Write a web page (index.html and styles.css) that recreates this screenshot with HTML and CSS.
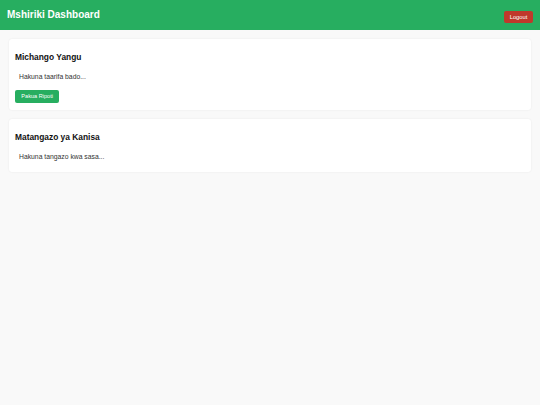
FILE: index.html
```html
<!DOCTYPE html>
<html lang="sw">
<head>
<meta charset="utf-8">
<title>Mshiriki Dashboard</title>
<link rel="stylesheet" href="styles.css">
</head>
<body>
<header class="topbar">
  <h1 class="brand">Mshiriki Dashboard</h1>
  <button class="btn-logout">Logout</button>
</header>
<main class="content">
  <section class="card">
    <h3 class="card-title">Michango Yangu</h3>
    <div class="card-body">Hakuna taarifa bado...</div>
    <button class="btn-green">Pakua Ripoti</button>
  </section>
  <section class="card">
    <h3 class="card-title">Matangazo ya Kanisa</h3>
    <div class="card-body">Hakuna tangazo kwa sasa...</div>
  </section>
</main>
</body>
</html>
```
FILE: styles.css
```css
html, body {
  margin: 0;
  padding: 0;
}
body {
  background: #f9f9f9;
  font-family: "Liberation Sans", Arial, sans-serif;
  color: #222;
  width: 540px;
  height: 405px;
}
.topbar {
  height: 30px;
  box-sizing: border-box;
  background: #27ae60;
  display: flex;
  align-items: center;
  justify-content: space-between;
  padding: 0 7px;
}
.brand {
  margin: 0;
  color: #fff;
  font-size: 10px;
  font-weight: bold;
  line-height: 11.5px;
}
.btn-logout {
  margin-top: 4px;
  background: #c0392b;
  color: #fff;
  border: none;
  border-radius: 2px;
  font-family: "Liberation Sans", Arial, sans-serif;
  font-size: 5.8px;
  line-height: 6.6px;
  padding: 3px 5.6px;
}
.content {
  padding: 9px 9px 0;
  display: flex;
  flex-direction: column;
  gap: 9px;
}
.card {
  background: #fff;
  border-radius: 3px;
  box-shadow: 0 0 2px rgba(0, 0, 0, 0.08);
  padding: 7px 6px;
}
.card-title {
  margin: 6.6px 0 7px;
  font-size: 8.4px;
  line-height: 9.65px;
  font-weight: bold;
  color: #111;
}
.card-body {
  padding: 4px 4px 3.3px;
  font-size: 6.8px;
  line-height: 7.8px;
  color: #333;
}
.btn-green {
  margin-top: 5.6px;
  display: block;
  background: #27ae60;
  color: #fff;
  border: none;
  border-radius: 2px;
  font-family: "Liberation Sans", Arial, sans-serif;
  font-size: 5.6px;
  line-height: 6.6px;
  padding: 3.35px 6.3px;
}
```
